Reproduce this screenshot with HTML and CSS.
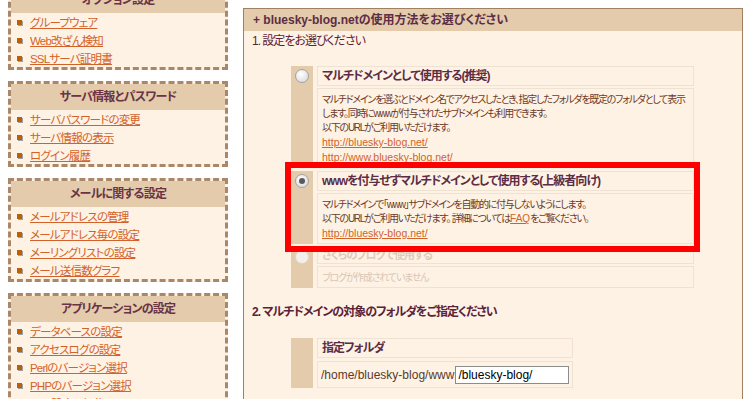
FILE: index.html
```html
<!DOCTYPE html>
<html>
<head>
  <meta charset="utf-8">
  <title>マルチドメイン設定</title>
  <link rel="stylesheet" href="styles.css">
</head>
<body>
  <div class="page">
    <div class="sidebar">
      <div class="menu">
        <div class="menu-title">オプション設定</div>
        <ul>
          <li><a href="#">グループウェア</a></li>
          <li><a href="#">Web改ざん検知</a></li>
          <li><a href="#">SSLサーバ証明書</a></li>
        </ul>
      </div>
      <div class="menu">
        <div class="menu-title">サーバ情報とパスワード</div>
        <ul>
          <li><a href="#">サーバパスワードの変更</a></li>
          <li><a href="#">サーバ情報の表示</a></li>
          <li><a href="#">ログイン履歴</a></li>
        </ul>
      </div>
      <div class="menu">
        <div class="menu-title">メールに関する設定</div>
        <ul>
          <li><a href="#">メールアドレスの管理</a></li>
          <li><a href="#">メールアドレス毎の設定</a></li>
          <li><a href="#">メーリングリストの設定</a></li>
          <li><a href="#">メール送信数グラフ</a></li>
        </ul>
      </div>
      <div class="menu">
        <div class="menu-title">アプリケーションの設定</div>
        <ul>
          <li><a href="#">データベースの設定</a></li>
          <li><a href="#">アクセスログの設定</a></li>
          <li><a href="#">Perlのバージョン選択</a></li>
          <li><a href="#">PHPのバージョン選択</a></li>
          <li><a href="#">PHP設定の編集</a></li>
        </ul>
      </div>
    </div>

    <div class="main">
      <div class="panel">
        <div class="panel-title">+ bluesky-blog.netの使用方法をお選びください</div>
        <div class="panel-body">
          <h2 class="section">1. 設定をお選びください</h2>

          <div class="options">
            <div class="option">
              <div class="radio-cell"><span class="radio"></span></div>
              <div class="opt-title">マルチドメインとして使用する(推奨)</div>
              <div class="opt-desc">
                マルチドメインを選ぶとドメイン名でアクセスしたとき、指定したフォルダを既定のフォルダとして表示<br>
                します。同時にwwwが付与されたサブドメインも利用できます。<br>
                以下のURLがご利用いただけます。<br>
                <a href="#">http://bluesky-blog.net/</a><br>
                <a href="#">http://www.bluesky-blog.net/</a>
              </div>
            </div>
            <div class="option">
              <div class="radio-cell"><span class="radio checked"></span></div>
              <div class="opt-title">wwwを付与せずマルチドメインとして使用する(上級者向け)</div>
              <div class="opt-desc">
                マルチドメインで「www」サブドメインを自動的に付与しないようにします。<br>
                以下のURLがご利用いただけます。 詳細については<a href="#" class="faq">FAQ</a>をご覧ください。<br>
                <a href="#">http://bluesky-blog.net/</a>
              </div>
            </div>
            <div class="option disabled">
              <div class="radio-cell"><span class="radio"></span></div>
              <div class="opt-title">さくらのブログで使用する</div>
              <div class="opt-desc">ブログが作成されていません</div>
            </div>
            <div class="highlight"></div>
          </div>

          <h2 class="section section-2">2. マルチドメインの対象のフォルダをご指定ください</h2>

          <div class="folder">
            <div class="radio-cell"></div>
            <div class="opt-title">指定フォルダ</div>
            <div class="folder-value">
              <span>/home/bluesky-blog/www</span>
              <input type="text" value="/bluesky-blog/">
            </div>
          </div>
        </div>
      </div>
    </div>
  </div>
</body>
</html>
```

FILE: styles.css
```css
body {
  margin: 0;
  background-color: #fff;
  font-family: "Liberation Sans", "Noto Sans CJK JP", sans-serif;
  font-size: 12px;
  font-feature-settings: "palt";
}

.page {
  display: flex;
  align-items: flex-start;
  gap: 15px;
  padding: 8px 8px 0;
}

/* サイドメニュー */
.sidebar {
  width: 220px;
  flex-shrink: 0;
  margin-top: -24px;
}

.menu {
  border: 3px dashed #a8876a;
  background-color: #fef2e4;
  margin-bottom: 11px;
}

.menu-title {
  background-color: #e3cbab;
  height: 26px;
  line-height: 26px;
  text-align: center;
  font-size: 12px;
  font-weight: bold;
  letter-spacing: -0.8px;
  color: #6a3346;
}

.menu ul {
  list-style: none;
  margin: 0;
  padding: 0 0 0 6px;
}

.menu li {
  display: flex;
  align-items: center;
  height: 18px;
}

.menu li::before {
  content: "";
  width: 5px;
  height: 5px;
  background-color: #b8600c;
  box-shadow: 1px 1px 0 #a0a0a0;
  margin-right: 8px;
}

.menu a {
  color: #d2622a;
  font-size: 11.5px;
  letter-spacing: -0.8px;
}

/* メイン */
.main {
  width: 500px;
}

.panel {
  border: 1px solid #a08060;
  background-color: #fef2e4;
  height: 420px;
}

.panel-title {
  background-color: #e3cbab;
  height: 22px;
  line-height: 22px;
  padding-left: 9px;
  font-weight: bold;
  color: #5c2d45;
}

.panel-body {
  padding: 3px 0 0 8px;
}

.section {
  margin: 0;
  font-size: 12px;
  font-weight: normal;
  line-height: 14px;
  letter-spacing: -1px;
  color: #5c2238;
}

.section-2 {
  margin-top: 17px;
  font-weight: bold;
}

.options {
  position: relative;
  width: 403px;
  margin: 18px 0 0 39px;
  display: flex;
  flex-direction: column;
  gap: 3px;
}

.option {
  display: grid;
  grid-template-columns: 22px 1fr;
  column-gap: 4px;
  row-gap: 2px;
}

.radio-cell {
  grid-row: span 2;
  background-color: #e3cbab;
  display: flex;
  justify-content: center;
  align-items: flex-start;
}

.radio {
  position: relative;
  width: 12px;
  height: 12px;
  margin-top: 3px;
  border-radius: 50%;
  border: 1px solid #a3a3a3;
  background: radial-gradient(circle at 40% 35%, #ffffff, #d4d4d4);
}

.radio.checked::after {
  content: "";
  position: absolute;
  left: 3px;
  top: 3px;
  width: 6px;
  height: 6px;
  border-radius: 50%;
  background-color: #5a5a5a;
}

.opt-title {
  border: 1px solid #f0e2d2;
  height: 20px;
  box-sizing: border-box;
  padding-left: 4px;
  font-size: 12px;
  font-weight: bold;
  line-height: 18px;
  letter-spacing: -1px;
  color: #5c2d45;
}

.opt-desc {
  border: 1px solid #f0e2d2;
  padding: 4px 2px 2px 4px;
  font-size: 10px;
  line-height: 14px;
  letter-spacing: -1.25px;
  white-space: nowrap;
  overflow: hidden;
  color: #6b3a2a;
}

.opt-desc a {
  color: #d2622a;
  font-size: 10.5px;
  letter-spacing: 0;
}

.opt-desc a.faq {
  font-size: 10px;
}

.disabled .radio {
  border-color: #e0d6cc;
  background: #f3efeb;
}

.disabled .opt-title {
  height: 17px;
  line-height: 15px;
  font-size: 11px;
  color: #dccbbb;
}

.disabled .opt-desc {
  color: #d8c6b6;
}

.highlight {
  position: absolute;
  left: -6px;
  right: -6px;
  top: 96px;
  height: 78px;
  border: 6px solid #ff0000;
}

/* フォルダ指定 */
.folder {
  width: 282px;
  margin: 19px 0 0 39px;
  display: grid;
  grid-template-columns: 22px 1fr;
  column-gap: 4px;
  row-gap: 3px;
}

.folder-value {
  border: 1px solid #f0e2d2;
  height: 27px;
  box-sizing: border-box;
  padding: 0 3px;
  display: flex;
  align-items: center;
  gap: 1px;
  white-space: nowrap;
  color: #5a3a2a;
}

.folder-value input {
  flex-shrink: 0;
  width: 114px;
  height: 18px;
  box-sizing: border-box;
  border: 1px solid #8c8c8c;
  padding: 0 2px;
  font-family: "Liberation Sans", sans-serif;
  font-size: 12px;
  color: #000;
}
```
